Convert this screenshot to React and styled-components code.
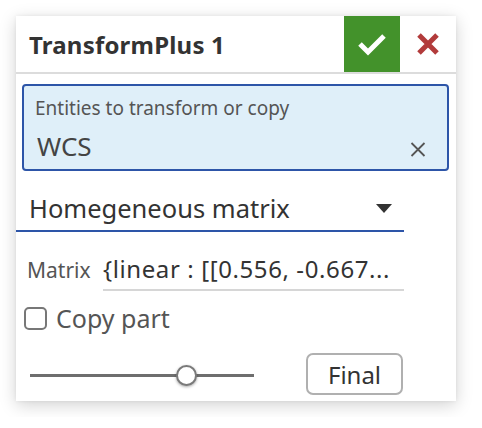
import React from 'react'
import styled, { createGlobalStyle } from 'styled-components'

const Global = createGlobalStyle`
  body {
    margin: 0;
    background: #fff;
    font-family: "Noto Sans", "Open Sans", sans-serif;
  }
`

const Page = styled.div`
  padding: 16px;
`

const Panel = styled.div`
  width: 440px;
  background: #fff;
  box-shadow: 0 4px 16px rgba(0, 0, 0, 0.18), 0 0 4px rgba(0, 0, 0, 0.06);
  padding-bottom: 6px;
`

const Header = styled.div`
  display: flex;
  align-items: center;
  height: 56px;
  border-bottom: 2px solid #dcdcdc;
`

const Title = styled.div`
  flex: 1;
  padding-left: 13px;
  font-size: 24px;
  font-weight: 700;
  letter-spacing: 0.2px;
  color: #333;
`

const OkButton = styled.div`
  width: 56px;
  height: 56px;
  background: #43922b;
  display: flex;
  align-items: center;
  justify-content: center;
`

const CancelButton = styled.div`
  width: 56px;
  height: 56px;
  display: flex;
  align-items: center;
  justify-content: center;
`

const Body = styled.div`
  padding: 10px 7px 0 6px;
`

const SelectBox = styled.div`
  position: relative;
  height: 87px;
  box-sizing: border-box;
  background: #dfeff9;
  border: 2px solid #2d55a8;
  border-radius: 4px;
  padding: 9px 11px 0;
`

const Label = styled.div`
  font-size: 19px;
  color: #555;
`

const Chip = styled.div`
  margin-top: 7px;
  padding-left: 2px;
  font-size: 26px;
  color: #444;
`

const Clear = styled.div`
  position: absolute;
  right: 21px;
  top: 56px;
  display: flex;
`

const Dropdown = styled.div`
  display: flex;
  align-items: center;
  width: 388px;
  margin: 15px 0 0 -6px;
  height: 46px;
  box-sizing: border-box;
  padding: 0 12px 0 13px;
  border-bottom: 2px solid #2d55a8;
  font-size: 25.5px;
  color: #333;
`

const Grow = styled.div`
  flex: 1;
`

const Row = styled.div`
  display: flex;
  align-items: baseline;
  margin-top: 20px;
`

const RowLabel = styled.div`
  width: 76px;
  padding-left: 5px;
  font-size: 21px;
  color: #555;
`

const Value = styled.div`
  width: 301px;
  border-bottom: 2px solid #d6d6d6;
  padding-bottom: 4px;
  font-size: 24px;
  letter-spacing: 0.6px;
  color: #333;
  white-space: nowrap;
  overflow: hidden;
`

const Check = styled.label`
  display: flex;
  align-items: center;
  gap: 9px;
  margin-top: 10px;
  padding-left: 2px;
  font-size: 25px;
  color: #555;
`

const Box = styled.span`
  width: 23px;
  height: 23px;
  box-sizing: border-box;
  border: 2px solid #777;
  border-radius: 5px;
`

const Footer = styled.div`
  display: flex;
  align-items: center;
  margin-top: 18px;
`

const Slider = styled.div`
  position: relative;
  width: 224px;
  height: 3px;
  margin: 3px 0 0 8px;
  background: #6e6e6e;
`

const Thumb = styled.div`
  position: absolute;
  top: -9px;
  margin-left: -10px;
  width: 21px;
  height: 21px;
  box-sizing: border-box;
  border-radius: 50%;
  background: #fff;
  border: 2px solid #7a7a7a;
  box-shadow: 0 1px 3px rgba(0, 0, 0, 0.35);
`

const FinalButton = styled.button`
  margin-left: 52px;
  width: 97px;
  height: 42px;
  padding: 0;
  background: #fff;
  border: 2px solid #b0b0b0;
  border-radius: 7px;
  font-family: inherit;
  font-size: 24px;
  color: #333;
`

export default function App() {
  return (
    <Page>
      <Global />
      <Panel>
        <Header>
          <Title>TransformPlus 1</Title>
          <OkButton>
            <svg width="30" height="24" viewBox="0 0 30 24">
              <path d="M3 12 L11 20 L27 4" fill="none" stroke="#fff" strokeWidth="5" />
            </svg>
          </OkButton>
          <CancelButton>
            <svg width="24" height="24" viewBox="0 0 24 24">
              <path d="M3 3 L21 21 M21 3 L3 21" stroke="#b23b3b" strokeWidth="5" />
            </svg>
          </CancelButton>
        </Header>
        <Body>
          <SelectBox>
            <Label>Entities to transform or copy</Label>
            <Chip>WCS</Chip>
            <Clear>
              <svg width="16" height="15" viewBox="0 0 16 15">
                <path d="M1.5 1 L14.5 14 M14.5 1 L1.5 14" stroke="#555" strokeWidth="1.8" />
              </svg>
            </Clear>
          </SelectBox>
          <Dropdown>
            <Grow>Homegeneous matrix</Grow>
            <svg width="16" height="9" viewBox="0 0 16 9">
              <path d="M0 0 H16 L8 9 Z" fill="#333" />
            </svg>
          </Dropdown>
          <Row>
            <RowLabel>Matrix</RowLabel>
            <Value>{'{linear : [[0.556, -0.667...'}</Value>
          </Row>
          <Check>
            <Box />
            Copy part
          </Check>
          <Footer>
            <Slider>
              <Thumb style={{ left: `${(156 / 224) * 100}%` }} />
            </Slider>
            <FinalButton>Final</FinalButton>
          </Footer>
        </Body>
      </Panel>
    </Page>
  )
}
